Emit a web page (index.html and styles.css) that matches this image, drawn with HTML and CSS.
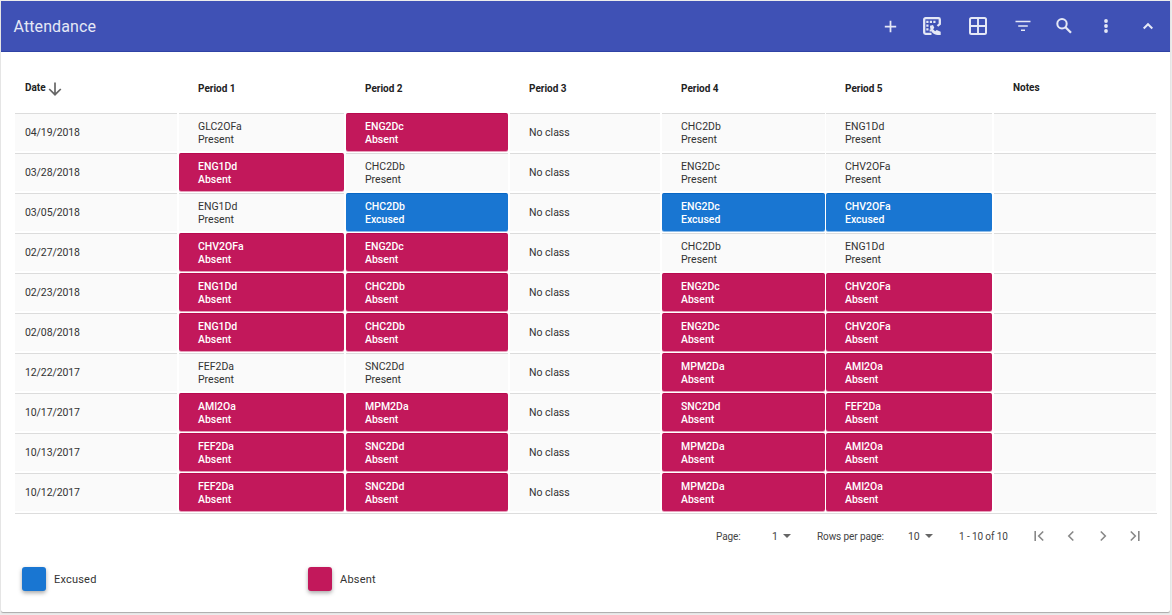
FILE: index.html
```
<!DOCTYPE html>
<html lang="en">
<head>
<meta charset="utf-8">
<title>Attendance</title>
<link rel="stylesheet" href="styles.css">
</head>
<body>
<main class="card">
  <header class="toolbar">
    <h1 class="title">Attendance</h1>
    <div class="actions">
      <svg class="icon" viewBox="0 0 24 24"><path d="M12 5.500v13M5.500 12h13" fill="none" stroke="currentColor" stroke-width="2"/></svg>
      <svg class="icon" viewBox="0 0 20 20"><path d="M9.500 17.800H3.500a1.300 1.300 0 0 1-1.300-1.300v-13a1.300 1.300 0 0 1 1.300-1.300h13a1.300 1.300 0 0 1 1.300 1.300V8L15.500 10" fill="none" stroke="currentColor" stroke-width="2.300"/><path d="M4.300 4.800h2.200V7H4.300zM7.800 4.800H10V7H7.800zM11.300 4.800h2.200V7h-2.200zM4.300 8.500h2.200v2.200H4.300zM4.300 12.200h2.200v2.200H4.300zM7.600 13.500h1.800v2H7.600z" fill="currentColor"/><path d="M8 9.800l3-.8 1.300 2.800-1.200 1.400 2 2 1.600-1.200 4 1.800v3.200h-3C11.500 19 8 15.500 8 9.800z" fill="currentColor"/></svg>
      <svg class="icon" viewBox="0 0 20 20"><rect x="2" y="2" width="16" height="16" rx="1.500" fill="none" stroke="currentColor" stroke-width="2"/><path d="M10 2v16M2 10h16" stroke="currentColor" stroke-width="1.900"/></svg>
      <svg class="icon" viewBox="0 0 20 20"><path d="M2.500 5.500h15M5.200 10h9.600M8 14.200h4" fill="none" stroke="currentColor" stroke-width="1.600"/></svg>
      <svg class="icon" viewBox="0 0 20 20"><circle cx="8" cy="7.800" r="4.700" fill="none" stroke="currentColor" stroke-width="2"/><path d="M11.500 11.300l5.500 5.500" stroke="currentColor" stroke-width="2.300"/></svg>
      <svg class="icon" viewBox="0 0 20 20"><g fill="currentColor"><circle cx="10" cy="5" r="1.900"/><circle cx="10" cy="10" r="1.900"/><circle cx="10" cy="15" r="1.900"/></g></svg>
      <svg class="icon" viewBox="0 0 20 20"><path d="M5.700 12.500L10 8.200l4.300 4.300" fill="none" stroke="currentColor" stroke-width="2"/></svg>
    </div>
  </header>

  <section class="table">
    <div class="row head">
      <div class="th date">Date<svg class="sort" viewBox="0 0 14 14"><path d="M7 .5v12M1.200 7L7 12.700 12.800 7" fill="none" stroke="currentColor" stroke-width="1.700"/></svg></div>
      <div class="th">Period 1</div><div class="th">Period 2</div><div class="th">Period 3</div><div class="th">Period 4</div><div class="th">Period 5</div><div class="th notes">Notes</div>
    </div>
    <div class="row"><div class="cell date">04/19/2018</div><div class="cell">GLC2OFa<br>Present</div><div class="cell absent">ENG2Dc<br>Absent</div><div class="cell">No class</div><div class="cell">CHC2Db<br>Present</div><div class="cell">ENG1Dd<br>Present</div><div class="cell last"></div></div>
    <div class="row"><div class="cell date">03/28/2018</div><div class="cell absent">ENG1Dd<br>Absent</div><div class="cell">CHC2Db<br>Present</div><div class="cell">No class</div><div class="cell">ENG2Dc<br>Present</div><div class="cell">CHV2OFa<br>Present</div><div class="cell last"></div></div>
    <div class="row"><div class="cell date">03/05/2018</div><div class="cell">ENG1Dd<br>Present</div><div class="cell excused">CHC2Db<br>Excused</div><div class="cell">No class</div><div class="cell excused">ENG2Dc<br>Excused</div><div class="cell excused">CHV2OFa<br>Excused</div><div class="cell last"></div></div>
    <div class="row"><div class="cell date">02/27/2018</div><div class="cell absent">CHV2OFa<br>Absent</div><div class="cell absent">ENG2Dc<br>Absent</div><div class="cell">No class</div><div class="cell">CHC2Db<br>Present</div><div class="cell">ENG1Dd<br>Present</div><div class="cell last"></div></div>
    <div class="row"><div class="cell date">02/23/2018</div><div class="cell absent">ENG1Dd<br>Absent</div><div class="cell absent">CHC2Db<br>Absent</div><div class="cell">No class</div><div class="cell absent">ENG2Dc<br>Absent</div><div class="cell absent">CHV2OFa<br>Absent</div><div class="cell last"></div></div>
    <div class="row"><div class="cell date">02/08/2018</div><div class="cell absent">ENG1Dd<br>Absent</div><div class="cell absent">CHC2Db<br>Absent</div><div class="cell">No class</div><div class="cell absent">ENG2Dc<br>Absent</div><div class="cell absent">CHV2OFa<br>Absent</div><div class="cell last"></div></div>
    <div class="row"><div class="cell date">12/22/2017</div><div class="cell">FEF2Da<br>Present</div><div class="cell">SNC2Dd<br>Present</div><div class="cell">No class</div><div class="cell absent">MPM2Da<br>Absent</div><div class="cell absent">AMI2Oa<br>Absent</div><div class="cell last"></div></div>
    <div class="row"><div class="cell date">10/17/2017</div><div class="cell absent">AMI2Oa<br>Absent</div><div class="cell absent">MPM2Da<br>Absent</div><div class="cell">No class</div><div class="cell absent">SNC2Dd<br>Absent</div><div class="cell absent">FEF2Da<br>Absent</div><div class="cell last"></div></div>
    <div class="row"><div class="cell date">10/13/2017</div><div class="cell absent">FEF2Da<br>Absent</div><div class="cell absent">SNC2Dd<br>Absent</div><div class="cell">No class</div><div class="cell absent">MPM2Da<br>Absent</div><div class="cell absent">AMI2Oa<br>Absent</div><div class="cell last"></div></div>
    <div class="row"><div class="cell date">10/12/2017</div><div class="cell absent">FEF2Da<br>Absent</div><div class="cell absent">SNC2Dd<br>Absent</div><div class="cell">No class</div><div class="cell absent">MPM2Da<br>Absent</div><div class="cell absent">AMI2Oa<br>Absent</div><div class="cell last"></div></div>
  </section>

  <footer class="pager">
    <span class="page-label">Page:</span>
    <span class="select page-select">1<i class="caret"></i></span>
    <span class="rows-label">Rows per page:</span>
    <span class="select rows-select">10<i class="caret"></i></span>
    <span class="range">1 - 10 of 10</span>
    <span class="nav">
      <svg viewBox="0 0 16 16"><path d="M4.200 3v10M12.200 3.500L7.700 8l4.500 4.500"/></svg>
      <svg viewBox="0 0 16 16"><path d="M10.300 3.500L5.800 8l4.500 4.500"/></svg>
      <svg viewBox="0 0 16 16"><path d="M5.800 3.500L10.300 8l-4.500 4.500"/></svg>
      <svg viewBox="0 0 16 16"><path d="M11.800 3v10M3.800 3.500L8.300 8l-4.500 4.500"/></svg>
    </span>
  </footer>

  <div class="legend">
    <div class="key"><span class="swatch excused"></span>Excused</div>
    <div class="key"><span class="swatch absent"></span>Absent</div>
  </div>
</main>
</body>
</html>
```
FILE: styles.css
```
* { box-sizing: border-box; }
body {
  margin: 0;
  height: 615px;
  padding: 1px 2px 3px 1px;
  background: #ececec;
  font-family: Roboto, "Liberation Sans", sans-serif;
  color: #333;
  overflow: hidden;
}
.card {
  height: 611px;
  background: #fff;
  border-radius: 2px;
  box-shadow: 0 1px 1px #aaa;
}
.toolbar {
  height: 51px;
  display: flex;
  align-items: center;
  justify-content: space-between;
  padding: 0 12px 0 12.500px;
  background: #3f51b5;
  border: solid #2f43a5;
  border-width: 0 0 1px;
  color: #e5e8f6;
}
.title {
  margin: 0;
  font-size: 16px;
  font-weight: 400;
  letter-spacing: 0.1px;
}
.actions { display: flex; align-items: center; }
.icon { width: 20px; height: 20px; margin-left: 22px; }
.icon:nth-child(1) { width: 21px; height: 21px; }
.icon:nth-child(2) { margin-left: 21.500px; }
.icon:nth-child(3), .icon:nth-child(4) { margin-left: 25.500px; }
.icon:nth-child(5) { margin-left: 21px; }

.table { padding: 21px 13px 0 14px; }
.row {
  display: grid;
  grid-template-columns: 164px 167px 164px 152px 164px 168px 162px;
  height: 40px;
}
.table .row:last-child { height: 41px; border-bottom: 1px solid #ddd; }
.th {
  padding-left: 19px;
  font-size: 10px;
  font-weight: 700;
  line-height: 31px;
  color: #222;
}
.th.date { display: flex; padding-left: 10px; line-height: 30px; }
.th.notes { line-height: 30px; }
.sort { width: 14px; height: 14px; margin: 9px 0 0 2px; color: #666; }
.cell {
  height: 38px;
  margin-right: 2px;
  padding-left: 19px;
  display: flex;
  flex-direction: column;
  justify-content: center;
  background: #fafafa;
  border-top: 1px solid #dcdcdc;
  font-size: 10.500px;
  line-height: 13px;
}
.cell.date { padding-left: 10px; letter-spacing: -0.1px; }
.cell.last { margin-right: 0; }
.absent { background: #c2185b; }
.excused { background: #1976d2; }
.cell.absent, .cell.excused {
  border-radius: 2px;
  color: #fff;
  font-weight: 500;
}
.cell.absent { border-top-color: #b80a4f; box-shadow: 0 1px 0 #e8a0bc; }
.cell.excused { border-top-color: #0866c4; box-shadow: 0 1px 0 #8dbce9; }
.cell:nth-child(5) { margin-right: 1px; }

.pager {
  height: 44px;
  display: flex;
  align-items: center;
  padding-left: 715px;
  font-size: 10px;
  letter-spacing: -0.1px;
  color: #444;
}
.page-label { width: 56px; }
.select { display: flex; align-items: center; }
.page-select { width: 45px; font-size: 10.500px; }
.rows-select { width: 51px; font-size: 10.500px; }
.rows-label { width: 91px; }
.caret {
  margin-left: 5.500px;
  border: 4px solid transparent;
  border-top-color: #666;
  border-bottom: 0;
}
.range { width: 72px; }
.nav { display: flex; gap: 16px; }
.nav svg { width: 16px; height: 16px; fill: none; stroke: #888; stroke-width: 1.600; }

.legend { display: flex; padding: 9px 0 0 21px; font-size: 11px; }
.key { width: 286px; display: flex; align-items: center; gap: 8px; letter-spacing: 0.2px; }
.swatch {
  width: 24px;
  height: 24px;
  border-radius: 3px;
  box-shadow: 0 2px 4px rgba(0, 0, 0, 0.35);
}
```
